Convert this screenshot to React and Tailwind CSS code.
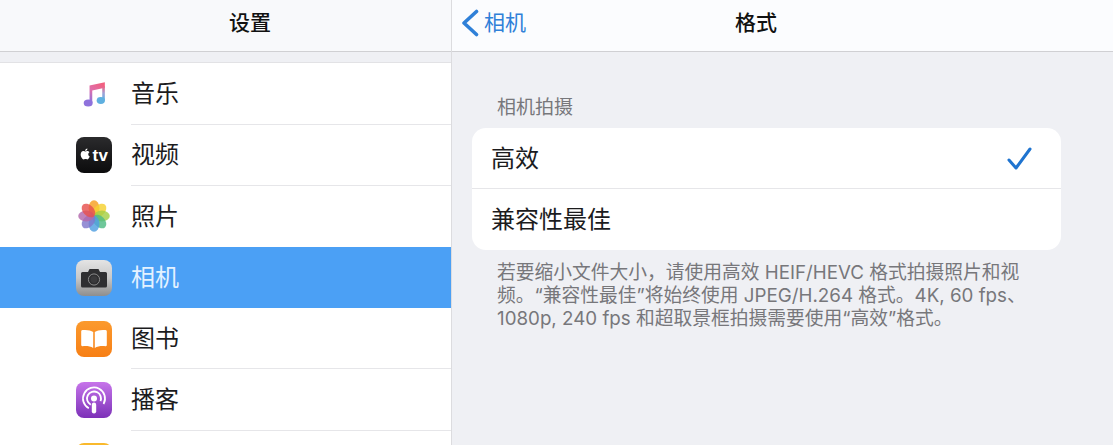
const FONT = 'font-["Inter","Noto_Sans_CJK_SC","Liberation_Sans",sans-serif]';

// app icons, all 36px squares
const MusicIcon = () => (
    <div className="w-9 h-9 rounded-lg bg-white flex items-center justify-center">
        <svg width="27" height="30" viewBox="0 0 30 32">
            <defs>
                <linearGradient id="note" x1="0.7" y1="0" x2="0.2" y2="1">
                    <stop offset="0" stopColor="#f2607f" />
                    <stop offset="0.55" stopColor="#dc6fae" />
                    <stop offset="1" stopColor="#8f72dc" />
                </linearGradient>
                <linearGradient id="note2" x1="0.5" y1="0" x2="0.5" y2="1">
                    <stop offset="0" stopColor="#f2607f" />
                    <stop offset="0.5" stopColor="#9fa2d8" />
                    <stop offset="1" stopColor="#5fb0e0" />
                </linearGradient>
            </defs>
            <path d="M9.5 6.5 L26.5 3 V9 L12.5 12 V26 H9.5 Z" fill="url(#note)" />
            <ellipse cx="8" cy="26" rx="5" ry="4" fill="#8f72dc" />
            <path d="M23.6 8 L26.5 7.4 V23 H23.6 Z" fill="url(#note2)" />
            <ellipse cx="22" cy="23.2" rx="4.6" ry="3.8" fill="#5fb0e0" />
        </svg>
    </div>
);

const TvIcon = () => (
    <div className="w-9 h-9 rounded-lg bg-gradient-to-b from-[#2b2b2d] to-[#0c0c0d] flex items-center justify-center">
        <svg width="13" height="14" viewBox="0 0 24 24" fill="white" className="-mt-0.5">
            <path d="M17.05 12.54c-.03-2.6 2.12-3.85 2.22-3.91-1.21-1.77-3.09-2.01-3.76-2.04-1.6-.16-3.12.94-3.93.94-.81 0-2.06-.92-3.39-.89-1.74.03-3.35 1.01-4.25 2.57-1.81 3.14-.46 7.8 1.3 10.35.86 1.25 1.89 2.65 3.24 2.6 1.3-.05 1.79-.84 3.36-.84 1.57 0 2.01.84 3.39.81 1.4-.02 2.28-1.27 3.14-2.53.99-1.45 1.4-2.85 1.42-2.93-.03-.01-2.72-1.04-2.74-4.13zM14.47 4.9c.72-.87 1.2-2.08 1.07-3.28-1.03.04-2.28.69-3.02 1.56-.66.77-1.24 2-1.09 3.18 1.15.09 2.32-.58 3.04-1.46z" />
        </svg>
        <span className="text-white text-[17px] leading-none font-semibold font-['Liberation_Sans',sans-serif] tracking-[0.5px]">tv</span>
    </div>
);

const PETALS = [
    ['#f6a020', 0], ['#f5d130', 45], ['#a3cf45', 90], ['#4fbb84', 135],
    ['#4f9fe0', 180], ['#7f78cc', 225], ['#b268ac', 270], ['#e6504e', 315],
];

const PhotosIcon = () => (
    <div className="w-9 h-9 rounded-lg bg-white flex items-center justify-center">
        <svg width="34" height="34" viewBox="0 0 34 34">
            {PETALS.map(([color, angle]) => (
                <ellipse key={angle} cx="17" cy="9.2" rx="5.4" ry="8" fill={color} opacity="0.82" transform={`rotate(${angle} 17 17)`} />
            ))}
        </svg>
    </div>
);

const CameraIcon = () => (
    <div className="w-9 h-9 rounded-lg bg-gradient-to-b from-[#e4e4e4] via-[#c8c8c8] to-[#8e8e8e] flex items-center justify-center">
        <svg width="28" height="22" viewBox="0 0 28 22">
            <path d="M2.5 5 H8 L9.5 2 H18.5 L20 5 H25.5 A1.5 1.5 0 0 1 27 6.5 V19 A1.5 1.5 0 0 1 25.5 20.5 H2.5 A1.5 1.5 0 0 1 1 19 V6.5 A1.5 1.5 0 0 1 2.5 5 Z" fill="#2f2f31" />
            <circle cx="14" cy="12.5" r="5.6" fill="none" stroke="#8a8a8a" strokeWidth="1" />
            <circle cx="14" cy="12.5" r="3.4" fill="#3a3a3c" />
        </svg>
    </div>
);

const BooksIcon = () => (
    <div className="w-9 h-9 rounded-lg bg-gradient-to-b from-[#fb9a2d] to-[#f77f14] flex items-center justify-center">
        <svg width="28" height="22" viewBox="0 0 28 22" fill="white">
            <path d="M13.2 4 C11 2.2 7 1.6 2.5 2 C1.7 2.1 1.2 2.6 1.2 3.4 V17 C1.2 17.8 1.8 18.3 2.6 18.2 C6.5 17.8 10.5 18.2 13.2 20 Z" />
            <path d="M14.8 4 C17 2.2 21 1.6 25.5 2 C26.3 2.1 26.8 2.6 26.8 3.4 V17 C26.8 17.8 26.2 18.3 25.4 18.2 C21.5 17.8 17.5 18.2 14.8 20 Z" />
        </svg>
    </div>
);

const PodcastIcon = () => (
    <div className="w-9 h-9 rounded-lg bg-gradient-to-b from-[#c774ea] to-[#7d30b8] flex items-center justify-center">
        <svg width="30" height="30" viewBox="0 0 30 30" fill="none" stroke="white">
            <circle cx="15" cy="13.5" r="11" strokeWidth="1.8" strokeDasharray="52 17" transform="rotate(118 15 13.5)" />
            <circle cx="15" cy="13.5" r="7" strokeWidth="1.8" strokeDasharray="32 12" transform="rotate(118 15 13.5)" />
            <circle cx="15" cy="13.5" r="3" fill="white" stroke="none" />
            <rect x="12.8" y="17.5" width="4.4" height="11" rx="2.2" fill="white" stroke="none" />
        </svg>
    </div>
);

const ROWS = [
    { label: '音乐', icon: <MusicIcon />, divider: true },
    { label: '视频', icon: <TvIcon />, divider: true },
    { label: '照片', icon: <PhotosIcon /> },
    { label: '相机', icon: <CameraIcon />, active: true },
    { label: '图书', icon: <BooksIcon />, divider: true },
    { label: '播客', icon: <PodcastIcon />, divider: true },
];

const SettingsRow = ({ label, icon, active, divider }) => (
    <div className={`h-[61.2px] shrink-0 flex items-center pl-[76px] ${active ? 'bg-[#4ba0f5]' : ''}`}>
        {icon}
        <div className={`ml-[19px] flex-1 h-full flex items-center pt-[1px] text-[24px] ${active ? 'text-[#e4f2ff]' : 'text-[#1c1c1e]'} ${divider ? 'border-b border-[#e6e6e9]' : ''}`}>
            {label}
        </div>
    </div>
);

const App = () => {
    return (
        <div className={`flex w-[1113px] h-[445px] overflow-hidden bg-[#eff0f4] ${FONT}`}>
            {/* sidebar */}
            <aside className="w-[452px] shrink-0 flex flex-col border-r border-[#dcdcdf]">
                <header className="h-[52px] shrink-0 flex items-center justify-center pl-[49px] pb-[6px] bg-[#f8f9fb] border-b border-[#d0d0d3] text-[21px] font-medium text-[#111]">
                    设置
                </header>
                <div className="h-[11.4px] shrink-0 bg-[#eff0f4] border-b border-[#e2e2e5]" />
                <div className="flex-1 bg-white flex flex-col overflow-hidden">
                    {ROWS.map((row) => (
                        <SettingsRow key={row.label} {...row} />
                    ))}
                    <div className="pl-[76px] pt-[12px]">
                        <div className="w-9 h-9 rounded-lg bg-[#f9b92c]" />
                    </div>
                </div>
            </aside>

            {/* detail */}
            <main className="flex-1 flex flex-col">
                <header className="relative h-[52px] shrink-0 flex items-center justify-center pr-[53px] pb-[6px] bg-[#fbfcfe] border-b border-[#d0d0d3]">
                    <div className="absolute left-[9px] top-0 h-[46px] flex items-center gap-[5px] text-[#2f80d8] text-[21px]">
                        <svg width="18" height="28" viewBox="0 0 18 28" fill="none" stroke="currentColor" strokeWidth="3.6" strokeLinecap="round" strokeLinejoin="round">
                            <path d="M15.5 2.5 L3 14 L15.5 25.5" />
                        </svg>
                        相机
                    </div>
                    <span className="text-[21px] font-medium text-[#111]">格式</span>
                </header>
                <div className="pl-5 pr-[52px] pt-[43px]">
                    <p className="pl-[25px] text-[19px] leading-[26px] text-[#77777b]">相机拍摄</p>
                    <div className="mt-[7px] bg-white rounded-[14px] overflow-hidden">
                        <div className="h-[61px] flex items-center justify-between pl-[19px] pr-[29px] pt-[1px] border-b border-[#e6e6e9] text-[24px] text-[#1c1c1e]">
                            高效
                            <svg width="25" height="24" viewBox="0 0 25 24" fill="none" stroke="#1f74d0" strokeWidth="3" strokeLinecap="round" strokeLinejoin="round">
                                <path d="M2 13 L9 21 L23 2" />
                            </svg>
                        </div>
                        <div className="h-[61px] flex items-center pl-[19px] pt-[1px] text-[24px] text-[#1c1c1e]">兼容性最佳</div>
                    </div>
                    <p className="mt-[11px] pl-[25px] text-[18.75px] leading-[23px] text-[#77777b] whitespace-nowrap">
                        若要缩小文件大小，请使用高效 HEIF/HEVC 格式拍摄照片和视<br />
                        频。“兼容性最佳”将始终使用 JPEG/H.264 格式。4K, 60 fps、<br />
                        1080p, 240 fps 和超取景框拍摄需要使用“高效”格式。
                    </p>
                </div>
            </main>
        </div>
    );
};

export default App;
